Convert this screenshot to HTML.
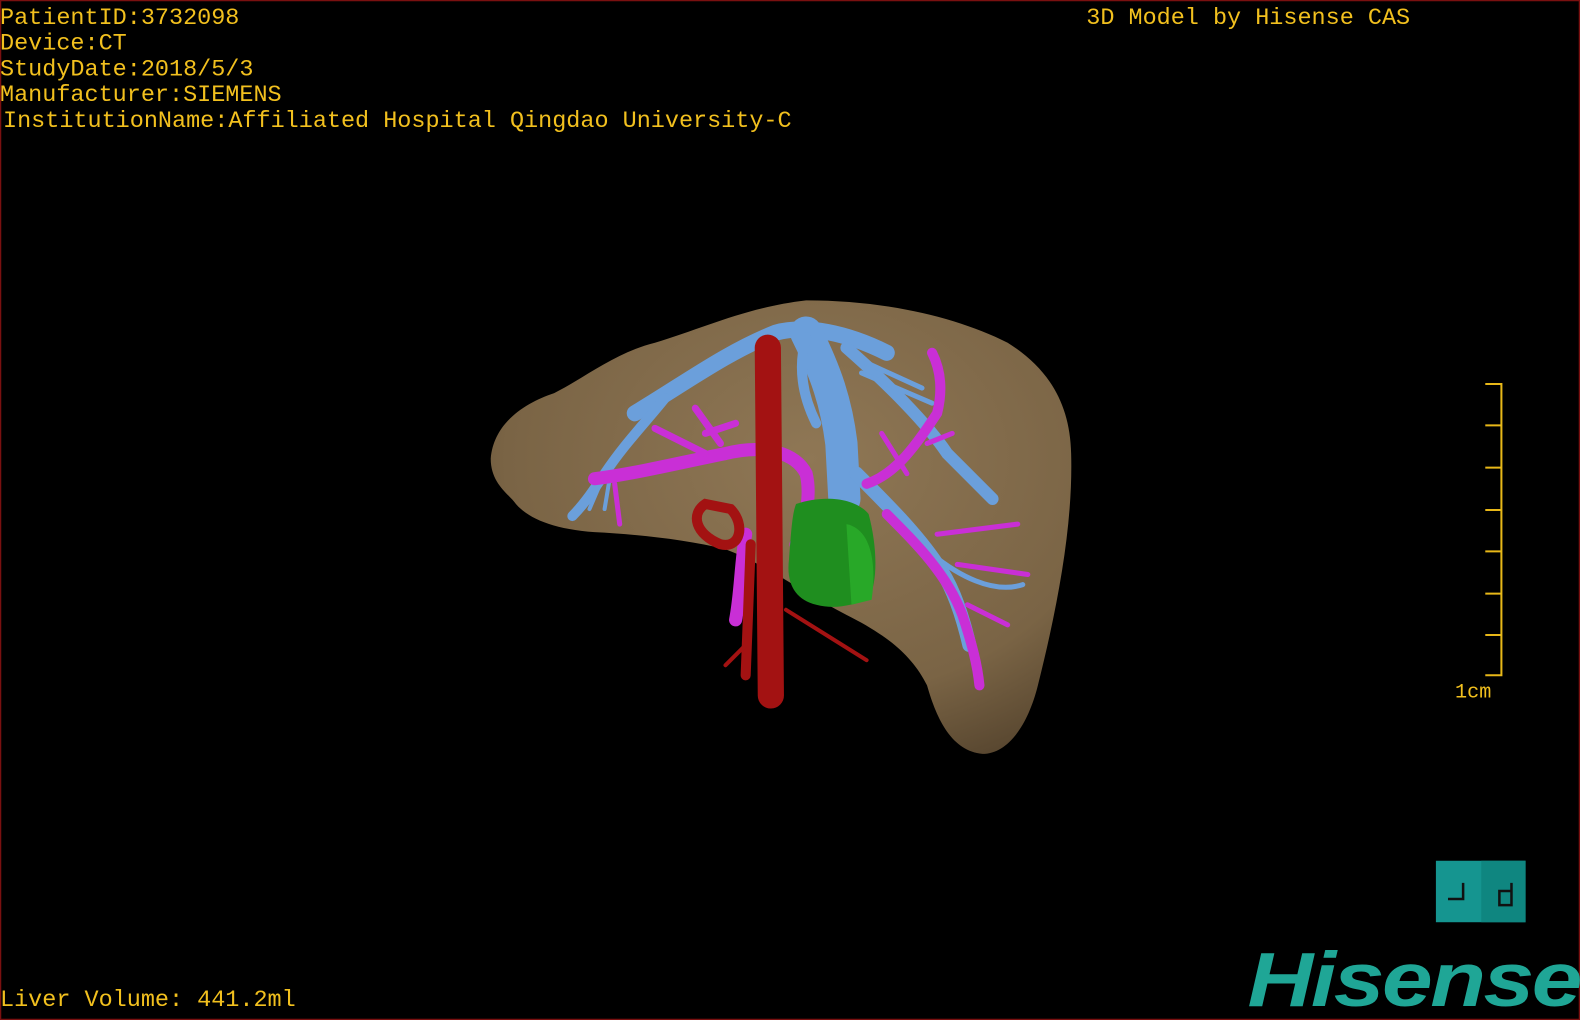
<!DOCTYPE html>
<html><head><meta charset="utf-8"><style>
html,body{margin:0;padding:0;background:#000;width:1580px;height:1020px;overflow:hidden}
svg{position:absolute;left:0;top:0}
.t{font-family:"Liberation Mono",monospace;fill:#f2c01e;font-size:23.3px}
</style></head><body>
<svg width="1580" height="1020" viewBox="0 0 1568 1012" preserveAspectRatio="none">
<defs>
<radialGradient id="lv" cx="0.55" cy="0.35" r="0.75">
<stop offset="0" stop-color="#8f7755"/><stop offset="0.7" stop-color="#7a6445"/><stop offset="1" stop-color="#54432d"/>
</radialGradient>
</defs>
<rect x="0.5" y="0.5" width="1567" height="1011" fill="#000" stroke="#7a1010" stroke-width="1.5"/>
<g class="t">
<text x="0" y="24">PatientID:3732098</text>
<text x="0" y="49">Device:CT</text>
<text x="0" y="75">StudyDate:2018/5/3</text>
<text x="0" y="100">Manufacturer:SIEMENS</text>
<text x="3" y="126">InstitutionName:Affiliated Hospital Qingdao University-C</text>
<text x="1078" y="24">3D Model by Hisense CAS</text>
<text x="0" y="998">Liver Volume: 441.2ml</text>
<text x="1444" y="692" font-size="20">1cm</text>
</g>
<path d="M1474,381H1490V670H1474M1474,422H1490M1474,464H1490M1474,506H1490M1474,547H1490M1474,589H1490M1474,630H1490" fill="none" stroke="#e8b818" stroke-width="2"/>
<!-- liver -->
<path d="M487,455 C490,420 520,400 550,390 C580,375 610,350 650,340 C700,325 740,305 800,298 C880,298 950,315 1000,340 C1040,365 1062,400 1063,450 C1065,520 1050,600 1030,680 C1020,720 1000,748 975,748 C945,745 930,715 920,680 C905,650 880,630 840,610 C800,590 760,560 720,545 C680,535 630,530 590,528 C550,525 525,515 512,500 C505,490 487,480 487,455Z" fill="url(#lv)"/>
<!-- blue vessels -->
<g fill="none" stroke="#6b9fdb" stroke-linecap="round">
<path d="M630,410 C680,380 720,350 770,330 C800,322 840,330 880,350" stroke-width="16"/>
<path d="M660,395 C640,420 620,440 600,470 C590,485 580,500 568,512" stroke-width="10"/>
<path d="M600,470 L585,505 M605,475 L600,505" stroke-width="4"/>
<path d="M800,330 C820,370 830,400 835,440 L838,495" stroke-width="32"/>
<path d="M800,335 C790,370 800,400 810,420" stroke-width="10"/>
<path d="M840,345 C880,380 920,420 940,450 C960,470 975,485 985,495" stroke-width="12"/>
<path d="M860,360 L915,385 M855,370 L925,400" stroke-width="5"/>
<path d="M850,470 C880,500 910,530 930,560 C945,580 955,610 962,640" stroke-width="14"/>
<path d="M925,550 C950,570 985,590 1015,580" stroke-width="5"/>
</g>
<!-- magenta vessels -->
<g fill="none" stroke="#c92fd6" stroke-linecap="round">
<path d="M590,475 C630,470 670,460 720,450 C760,440 790,450 800,470 C805,490 800,520 790,540" stroke-width="13"/>
<path d="M700,430 L730,420 M690,405 L715,440 M650,425 L700,450" stroke-width="7"/>
<path d="M610,480 L615,520" stroke-width="5"/>
<path d="M860,480 C890,470 910,440 930,410 C935,390 935,370 925,350" stroke-width="10"/>
<path d="M880,510 C910,540 940,570 955,610 C965,640 970,660 972,680" stroke-width="10"/>
<path d="M930,530 L1010,520 M950,560 L1020,570 M960,600 L1000,620" stroke-width="5"/>
<path d="M900,470 L875,430 M920,440 L945,430" stroke-width="5"/>
<path d="M740,530 C735,560 735,590 730,615" stroke-width="13"/>
</g>
<!-- green -->
<path d="M790,500 C820,490 850,495 862,510 C870,540 872,575 862,595 C845,600 830,605 810,600 C790,595 780,580 783,555 C785,530 786,510 790,500Z" fill="#1f8e1f"/>
<path d="M840,520 C865,525 870,560 865,595 L845,600 Z" fill="#28a828"/>
<!-- red -->
<g fill="none" stroke="#a31212" stroke-linecap="round">
<path d="M762,345 L765,690" stroke-width="26"/>
<path d="M745,540 L740,670" stroke-width="10"/>
<path d="M700,500 C685,510 690,530 715,540 C735,545 740,520 725,505 Z" stroke-width="10"/>
<path d="M780,605 L860,655 M740,640 L720,660" stroke-width="4"/>
</g>
<!-- logo -->
<rect x="1425" y="854" width="89" height="61" fill="#159590"/>
<rect x="1470" y="854" width="44" height="61" fill="#0f8680"/>
<path d="M1437,892H1452V876 M1500,876V898H1488V884H1500" fill="none" stroke="#111" stroke-width="2.5"/>
<text x="1238" y="998" font-family="Liberation Sans,sans-serif" font-weight="bold" font-style="italic" font-size="76" fill="#1fa696" letter-spacing="-2" textLength="330" lengthAdjust="spacingAndGlyphs">Hisense</text>
</svg>
</body></html>
